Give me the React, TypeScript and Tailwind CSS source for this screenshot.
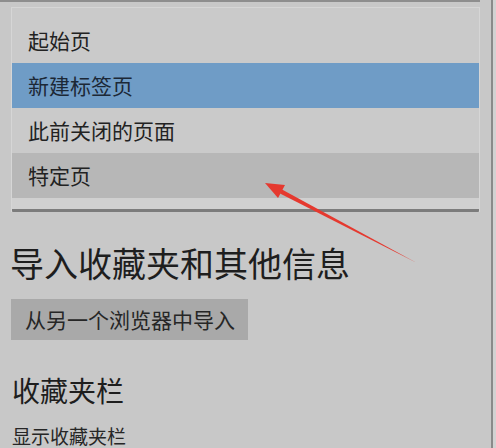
import React from "react";

const rows = [
  { label: "起始页", tone: "plain" },
  { label: "新建标签页", tone: "selected" },
  { label: "此前关闭的页面", tone: "plain" },
  { label: "特定页", tone: "hover" },
];

function rowClass(tone: string) {
  if (tone === "selected") return "bg-[#6f9cc6] text-[#1c2836]";
  if (tone === "hover") return "bg-[#b7b7b7] text-[#222]";
  return "text-[#222]";
}

export default function App() {
  return (
    <div
      className="relative w-[496px] h-[448px] overflow-hidden bg-[#c8c8c8] flex"
      style={{ fontFamily: '"Noto Sans CJK SC", "Noto Sans", sans-serif' }}
    >
      <div className="flex-1 flex flex-col">
        <div className="h-[2px] mr-[11px] bg-[#8e8e8e]" />
        <div className="ml-[11px] mr-[11px] mt-[5px] border border-[#d6d6d6] border-b-0 bg-[#cacaca] pt-[10px]">
          {rows.map((r) => (
            <div
              key={r.label}
              className={`h-[45px] flex items-center pl-[16px] text-[21px] leading-none ${rowClass(r.tone)}`}
            >
              {r.label}
            </div>
          ))}
          <div className="h-[11px] bg-[#d0d0d0]" />
          <div className="h-[3px] bg-[#7c7c7c] rounded-b-[1px]" />
        </div>

        <div className="pl-[10px] mt-[31px] text-[34px] leading-[40px] text-[#1e1e1e]">
          导入收藏夹和其他信息
        </div>

        <div className="ml-[11px] mt-[16px] w-[237px] h-[44px] bg-[#a9a9a9] flex items-center pl-[14px] text-[21px] leading-none text-[#262626]">
          从另一个浏览器中导入
        </div>

        <div className="pl-[12px] mt-[33px] text-[28px] leading-[34px] text-[#1e1e1e]">
          收藏夹栏
        </div>

        <div className="pl-[12px] mt-[17px] text-[19px] leading-[24px] text-[#262626]">
          显示收藏夹栏
        </div>
      </div>

      <div className="w-[5px] flex">
        <div className="w-[2px] bg-[#8a8a8a]" />
        <div className="flex-1 bg-[#d2d2d2]" />
      </div>

      <svg className="absolute inset-0" width="496" height="448" viewBox="0 0 496 448">
        <polygon points="416,262.5 414,261.5 280,193.5 282,189.5" fill="#e5392f" />
        <polygon points="265,183 278,198 285,185" fill="#e5392f" />
      </svg>
    </div>
  );
}
